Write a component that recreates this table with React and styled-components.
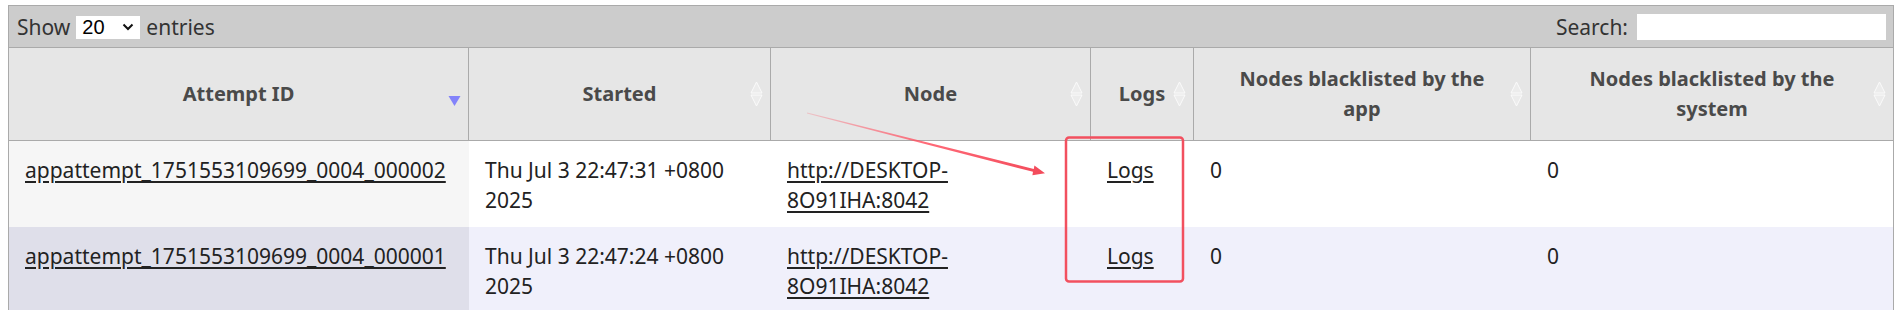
import React from "react";
import styled, { createGlobalStyle } from "styled-components";

const GlobalStyle = createGlobalStyle`
  body {
    margin: 0;
    background: #ffffff;
    font-family: "Noto Sans", "Open Sans", sans-serif;
  }
`;

const cols = "460px 302px 320px 103px 337px 362px";

const columns = [
  { title: "Attempt ID", sort: "desc" },
  { title: "Started", sort: "both" },
  { title: "Node", sort: "both" },
  { title: "Logs", sort: "both" },
  { title: "Nodes blacklisted by the app", sort: "both" },
  { title: "Nodes blacklisted by the system", sort: "both" },
];

const attempts = [
  {
    id: "appattempt_1751553109699_0004_000002",
    started: "Thu Jul 3 22:47:31 +0800 2025",
    node: "http://DESKTOP-8O91IHA:8042",
    appBl: "0",
    sysBl: "0",
  },
  {
    id: "appattempt_1751553109699_0004_000001",
    started: "Thu Jul 3 22:47:24 +0800 2025",
    node: "http://DESKTOP-8O91IHA:8042",
    appBl: "0",
    sysBl: "0",
  },
];

function SortIcon({ dir }) {
  if (dir === "desc") {
    return (
      <SortMark width="13" height="26" viewBox="0 0 13 26">
        <polygon points="0.5,15 12.5,15 6.5,25" fill="#8383fa" />
      </SortMark>
    );
  }
  return (
    <SortMark width="13" height="26" viewBox="0 0 13 26">
      <polygon points="6.5,1 12,12 1,12" fill="#ececec" stroke="#fbfbfb" strokeWidth="1" />
      <polygon points="1,14 12,14 6.5,25" fill="#ececec" stroke="#fbfbfb" strokeWidth="1" />
    </SortMark>
  );
}

function ChevronDown() {
  return (
    <svg width="12" height="8" viewBox="0 0 12 8">
      <path d="M1.5 1.5 L6 6 L10.5 1.5" fill="none" stroke="#111" strokeWidth="2" />
    </svg>
  );
}

export default function App() {
  return (
    <Page>
      <GlobalStyle />
      <Table>
        <TopBar>
          <Label>
            Show
            <SelectBox>
              20
              <ChevronDown />
            </SelectBox>
            entries
          </Label>
          <Label>
            Search:
            <SearchInput type="text" />
          </Label>
        </TopBar>
        <HeadRow>
          {columns.map((c, i) => (
            <HeadCell key={c.title} last={i === columns.length - 1}>
              <span>{c.title}</span>
              <SortIcon dir={c.sort} />
            </HeadCell>
          ))}
        </HeadRow>
        {attempts.map((a, i) => (
          <Row key={a.id}>
            <Cell sorted alt={i % 2 === 1}>
              <a href="#">{a.id}</a>
            </Cell>
            <Cell alt={i % 2 === 1}>{a.started}</Cell>
            <Cell alt={i % 2 === 1}>
              <a href="#">{a.node}</a>
            </Cell>
            <Cell alt={i % 2 === 1}>
              <a href="#">Logs</a>
            </Cell>
            <Cell alt={i % 2 === 1}>{a.appBl}</Cell>
            <Cell alt={i % 2 === 1}>{a.sysBl}</Cell>
          </Row>
        ))}
      </Table>

      <Annotation width="1899" height="310" viewBox="0 0 1899 310">
        <defs>
          <linearGradient id="arrowFade" x1="807" y1="113" x2="1045" y2="173" gradientUnits="userSpaceOnUse">
            <stop offset="0" stopColor="#ff5a6a" stopOpacity="0.25" />
            <stop offset="0.5" stopColor="#ff5060" stopOpacity="0.85" />
            <stop offset="1" stopColor="#f24a5a" />
          </linearGradient>
        </defs>
        <polygon
          points="806.9,113.4 1033.0,171.8 1032.4,175.2 1045,173.3 1034.4,165.4 1033.8,168.9 807.1,112.6"
          fill="url(#arrowFade)"
        />
        <rect x="1066" y="137.5" width="117" height="144" rx="3" fill="none" stroke="#f2505f" strokeWidth="2.5" />
      </Annotation>
    </Page>
  );
}

const Page = styled.div`
  position: relative;
  width: 1899px;
  height: 310px;
  overflow: hidden;
  padding: 5px 0 0 8px;
  box-sizing: border-box;
`;

const Table = styled.div`
  width: 1886px;
  box-sizing: border-box;
  border: 1px solid #aaaaaa;
  border-bottom: none;
`;

const TopBar = styled.div`
  height: 41px;
  background: #cccccc;
  display: flex;
  align-items: center;
  justify-content: space-between;
  padding: 0 7px 0 8px;
`;

const Label = styled.label`
  display: flex;
  align-items: center;
  gap: 6px;
  font-size: 21px;
  color: #333333;
`;

const SelectBox = styled.div`
  width: 64px;
  height: 23px;
  box-sizing: border-box;
  background: #ffffff;
  display: flex;
  align-items: center;
  justify-content: space-between;
  padding: 0 6px 0 6px;
  font-family: "Liberation Sans", Arial, sans-serif;
  font-size: 20px;
  color: #000000;
  margin-top: 1px;
`;

const SearchInput = styled.input`
  width: 249px;
  height: 26px;
  box-sizing: border-box;
  border: none;
  background: #ffffff;
  margin-left: 3px;
  outline: none;
`;

const HeadRow = styled.div`
  display: grid;
  grid-template-columns: ${cols};
  height: 94px;
  box-sizing: border-box;
  border-top: 1px solid #aaaaaa;
  border-bottom: 1px solid #aaaaaa;
  background: #e6e6e6;
`;

const HeadCell = styled.div`
  position: relative;
  display: flex;
  align-items: center;
  justify-content: center;
  text-align: center;
  padding: 0 30px;
  border-right: ${(p) => (p.last ? "none" : "1px solid #aaaaaa")};
  font-size: 20px;
  font-weight: 700;
  line-height: 30px;
  color: #4a4a4a;
`;

const SortMark = styled.svg`
  position: absolute;
  right: 7px;
  top: 33px;
`;

const Row = styled.div`
  display: grid;
  grid-template-columns: ${cols};
  height: 86px;
`;

const Cell = styled.div`
  padding: 14px 15px 12px 16px;
  font-size: 21px;
  line-height: 30px;
  color: #222222;
  background: ${(p) =>
    p.sorted ? (p.alt ? "#dfdfea" : "#f6f6f6") : p.alt ? "#f0f0fb" : "#ffffff"};

  a {
    color: #222222;
    text-decoration: underline;
    text-underline-offset: 3px;
  }
`;

const Annotation = styled.svg`
  position: absolute;
  top: 0;
  left: 0;
  pointer-events: none;
`;
